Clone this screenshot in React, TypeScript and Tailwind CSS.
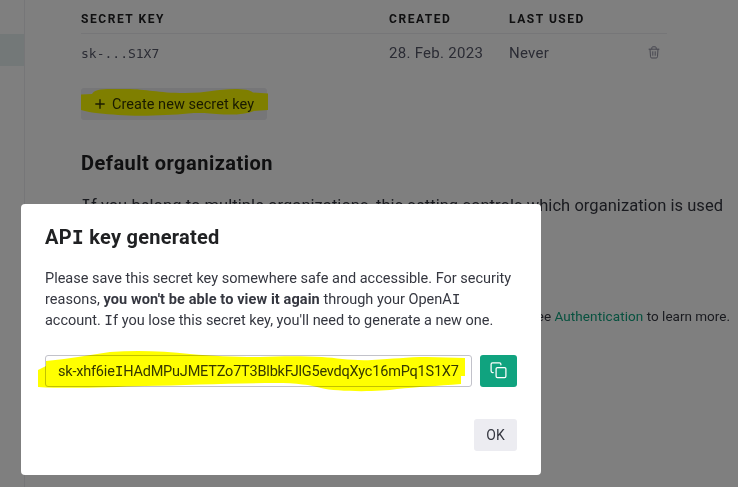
import type { ReactNode } from 'react';

/** Capital I with slab serifs, as in the brand typeface. */
function SlabI() {
  return <span className="font-['DejaVu_Sans_Mono',monospace] leading-none">I</span>;
}

function TrashIcon() {
  return (
    <svg className="mb-px" width="12" height="13" viewBox="0 0 12 13" fill="none" stroke="#8e8ea0" strokeWidth="1" strokeLinecap="round" strokeLinejoin="round">
      <path d="M1 3.200h10M3.800 3V1.800c0-.6.4-1 1-1h2.400c.6 0 1 .4 1 1V3M2 3.200l.5 7.500c0 .8.6 1.300 1.300 1.300h4.400c.7 0 1.300-.5 1.300-1.300L10 3.200M4.800 5.700v3.600M7.200 5.700v3.600" />
    </svg>
  );
}

function CopyIcon() {
  return (
    <svg width="18" height="18" viewBox="0.5 0.5 18 18" fill="none" stroke="white" strokeWidth="1.25" strokeLinecap="round" strokeLinejoin="round">
      <rect x="6.6" y="6" width="9.8" height="10" rx="1.3" />
      <path d="M3.7 11H3c-.8 0-1.4-.6-1.4-1.4V2.800C1.600 1.900 2.200 1.300 3 1.300h7c.8 0 1.400.6 1.400 1.400v.6" />
    </svg>
  );
}

function HeaderCell({ className, children }: { className: string; children: ReactNode }) {
  return <div className={`${className} text-[12px] font-bold tracking-[1.55px] text-[#202123]`}>{children}</div>;
}

function Page() {
  return (
    <div className="flex h-[487px] w-[738px] overflow-hidden bg-white">
      <aside className="w-[25px] shrink-0 border-r border-[#ececf1] pt-[34px]">
        <div className="h-8 bg-[#e6f1f1]" />
      </aside>
      <main className="w-[713px] shrink-0 pl-14 whitespace-nowrap">
        <div className="w-[586px]">
          <div className="flex h-[34px] items-end border-b border-[#ececf1] pb-[5px] leading-[17px]">
            <HeaderCell className="w-[308px]">SECRET KEY</HeaderCell>
            <HeaderCell className="w-[120px]">CREATED</HeaderCell>
            <HeaderCell className="w-[120px]">LAST USED</HeaderCell>
          </div>
          <div className="flex h-[38px] items-center text-[15px] tracking-[0.28px] text-[#565869]">
            <div className="w-[308px] pt-px font-['DejaVu_Sans_Mono',monospace] text-[13px] tracking-normal">sk-...S1X7</div>
            <div className="w-[120px]">28. Feb. 2023</div>
            <div className="w-[139px]">Never</div>
            <TrashIcon />
          </div>
        </div>
        <button className="relative mt-4 flex h-8 w-[186px] items-center rounded-[3px] bg-[#ececf1] pl-[14px] text-[14.5px] tracking-[0.04px] text-[#353700]">
          <svg className="absolute top-0 left-0" width="187" height="32" viewBox="0 0 187 32">
            <path fill="#ffff00" d="M0 6.500 11 6C13 2 19 1 30 1h16c20 0 30 4 58 4 22 0 32-4 50-4 8 0 16 1 18 3.500l15 1V22l-14 1c-8 3-18 4-30 3.500-16-1-22-2-36-1-20 2-50 3-70 1.500C24 26 10 25 0 22Z" />
          </svg>
          <svg className="relative" width="10" height="10" viewBox="0 0 10 10" stroke="currentColor" strokeWidth="1.4" strokeLinecap="round">
            <path d="M5 .8v8.400M.8 5h8.400" />
          </svg>
          <span className="relative ml-[7px] pt-[2px]">Create new secret key</span>
        </button>
        <h2 className="mt-[29px] text-[20px] leading-7 font-bold tracking-[0.48px] text-[#202123]">Default organization</h2>
        <p className="mt-[17px] text-[16.5px] leading-6 tracking-[0.05px] text-[#353740]">
          <SlabI />f you belong to multiple organizations, this setting controls which organization is used
        </p>
        <p className="mt-[88px] w-[649px] text-right text-[13.5px] leading-5 text-[#353740]">
          See <span className="tracking-[0.1px] text-[#10a37f]">Authentication</span> to learn more.
        </p>
      </main>
    </div>
  );
}

function Modal() {
  return (
    <div className="absolute top-[204px] left-[21px] h-[271px] w-[520px] rounded-[4px] bg-white px-6 pt-[19px] whitespace-nowrap">
      <h1 className="text-[20px] leading-7 font-bold tracking-[0.25px] text-[#202123]">AP<SlabI /> key generated</h1>
      <div className="mt-[17px] text-[14.5px] leading-[21px] text-[#353740]">
        <p className="h-[21px]">Please save this secret key somewhere safe and accessible. For security</p>
        <p className="h-[21px]">
          <span className="tracking-[0.05px]">reasons, </span>
          <b className="tracking-[0.1px]">you won't be able to view it again</b> through your OpenA<SlabI />
        </p>
        <p className="h-[21px] tracking-[-0.02px]">account. <SlabI />f you lose this secret key, you'll need to generate a new one.</p>
      </div>
      <div className="relative mt-[24px] flex gap-2">
        <div className="flex h-8 w-[427px] items-center rounded-[3px] border border-[#c2c2ca] pl-3 text-[14.5px] tracking-[-0.2px] text-[#353740]">
          <span className="pt-px">sk-xhf6ie<SlabI />HAdMPuJMETZo7T3BlbkFJlG5evdqXyc16mPq1S1X7</span>
        </div>
        <button className="flex h-8 w-[37px] items-center justify-center rounded-[3px] bg-[#10a37f]">
          <CopyIcon />
        </button>
        <svg className="absolute -top-[6px] -left-[7px] mix-blend-multiply" width="432" height="44" viewBox="0 0 432 44">
          <path fill="#ffff00" d="M0 21 8 17V12C30 10 50 6 72 3c26-2 54-1 80 2 24 2 44 3 70 3 22-1 44-1 62 0 16 1 30 4 50 3 22-1 34-3 55-3l38 1v18h-4v8c-24 2-44 3-64 5-18 3-60 3-76-1-10-3-24-5-46-5-40 0-90 2-130 3-34 1-76 3-107 1Z" />
        </svg>
      </div>
      <div className="mt-8 flex justify-end">
        <button className="h-8 w-[43px] rounded-[3px] bg-[#ececf1] text-[14px] text-[#353740]">OK</button>
      </div>
    </div>
  );
}

export default function App() {
  return (
    <div className="relative h-[487px] w-[738px] overflow-hidden font-['Roboto',sans-serif]">
      <div className="isolate">
        <Page />
      </div>
      <div className="absolute inset-0 bg-black/50" />
      <Modal />
    </div>
  );
}
